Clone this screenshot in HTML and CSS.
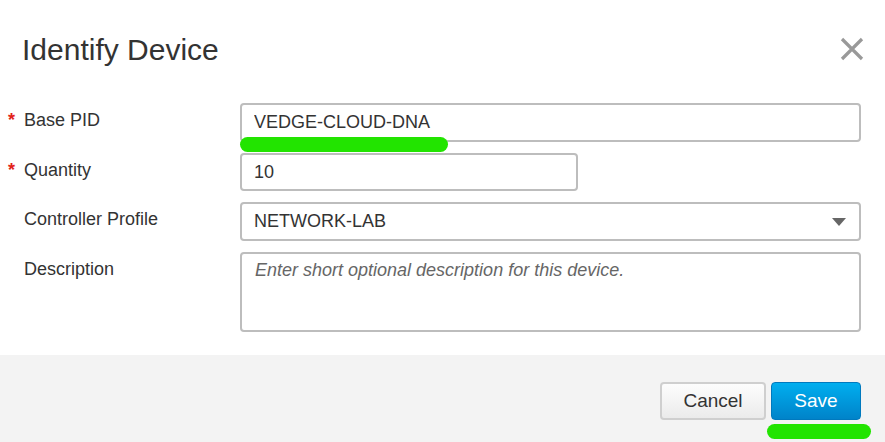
FILE: index.html
```html
<!DOCTYPE html>
<html>
<head>
<meta charset="utf-8">
<link rel="stylesheet" href="styles.css">
</head>
<body>
<div class="modal">
  <div class="modal-header">
    <h1 class="title">Identify Device</h1>
    <button class="close" aria-label="Close">
      <svg width="24" height="24" viewBox="0 0 24 24"><path d="M2 2 L22 22 M22 2 L2 22" stroke="#999" stroke-width="3.2" stroke-linecap="butt" fill="none"/></svg>
    </button>
  </div>
  <div class="modal-body">
    <div class="row">
      <label class="label"><span class="req">*</span>Base PID</label>
      <div class="field">
        <input class="input" type="text" value="VEDGE-CLOUD-DNA">
        <span class="mark mark-pid"></span>
      </div>
    </div>
    <div class="row">
      <label class="label"><span class="req">*</span>Quantity</label>
      <div class="field">
        <input class="input input-short" type="text" value="10">
      </div>
    </div>
    <div class="row">
      <label class="label"><span class="req"></span>Controller Profile</label>
      <div class="field">
        <div class="select">
          <span>NETWORK-LAB</span>
          <span class="caret"></span>
        </div>
      </div>
    </div>
    <div class="row">
      <label class="label"><span class="req"></span>Description</label>
      <div class="field">
        <textarea class="textarea" placeholder="Enter short optional description for this device."></textarea>
      </div>
    </div>
  </div>
  <div class="modal-footer">
    <button class="btn btn-cancel">Cancel</button>
    <div class="save-wrap">
      <button class="btn btn-save">Save</button>
      <span class="mark mark-save"></span>
    </div>
  </div>
</div>
</body>
</html>
```
FILE: styles.css
```css
* { box-sizing: border-box; }
html, body { margin: 0; padding: 0; }
body {
  background: #fff;
  font-family: "Liberation Sans", Arial, sans-serif;
  color: #333;
  width: 885px;
  height: 442px;
  overflow: hidden;
}
.modal { display: flex; flex-direction: column; height: 442px; }
.modal-header {
  display: flex;
  justify-content: space-between;
  align-items: flex-start;
  padding: 0 21px 0 22px;
  height: 103px;
}
.title {
  margin: 33px 0 0 0;
  font-size: 30px;
  font-weight: normal;
  line-height: 34px;
  color: #333;
}
.close {
  margin-top: 37px;
  padding: 0;
  border: 0;
  background: none;
  width: 24px;
  height: 24px;
  cursor: pointer;
}
.close svg { display: block; }
.modal-body {
  display: flex;
  flex-direction: column;
  gap: 11px;
  padding: 0 24px 0 8px;
}
.row { display: grid; grid-template-columns: 232px 1fr; }
.label {
  display: flex;
  font-size: 18px;
  line-height: 26px;
  padding-top: 4px;
  color: #333;
}
.req {
  width: 16px;
  color: #e2231a;
  font-size: 18px;
  font-weight: bold;
}
.field { position: relative; }
.input, .select, .textarea {
  display: block;
  width: 621px;
  height: 39px;
  border: 2px solid #bdbdbd;
  border-radius: 4px;
  padding: 0 12px;
  font-family: "Liberation Sans", Arial, sans-serif;
  font-size: 18px;
  color: #333;
  background: #fff;
  outline: none;
}
.input-short { width: 338px; height: 38px; }
.select {
  height: 39px;
  display: flex;
  align-items: center;
  justify-content: space-between;
  padding-right: 13px;
}
.caret {
  width: 0; height: 0;
  border-left: 7px solid transparent;
  border-right: 7px solid transparent;
  border-top: 8px solid #666;
}
.textarea {
  height: 80px;
  padding: 5px 13px;
  resize: none;
  line-height: 22px;
}
.textarea::placeholder { color: #666; font-style: italic; font-size: 18px; opacity: 1; }
.mark {
  position: absolute;
  background: #22e400;
  border-radius: 8px;
}
.mark-pid { left: 0; top: 34px; width: 208px; height: 15px; }
.modal-footer {
  margin-top: auto;
  height: 87px;
  background: #f3f3f3;
  display: flex;
  justify-content: flex-end;
  align-items: flex-start;
  gap: 5px;
  padding: 27px 24px 0 0;
}
.btn {
  height: 38px;
  border-radius: 4px;
  font-family: "Liberation Sans", Arial, sans-serif;
  font-size: 19px;
  padding: 0;
  cursor: pointer;
}
.btn-cancel {
  width: 106px;
  border: 2px solid #cfcfcf;
  background: linear-gradient(#fdfdfd, #ebebeb);
  color: #333;
}
.save-wrap { position: relative; }
.btn-save {
  width: 90px;
  border: 1px solid #0079be;
  background: linear-gradient(#00aeef, #0083c9);
  color: #fff;
}
.mark-save { left: -4px; top: 42px; width: 104px; height: 15px; }
```
